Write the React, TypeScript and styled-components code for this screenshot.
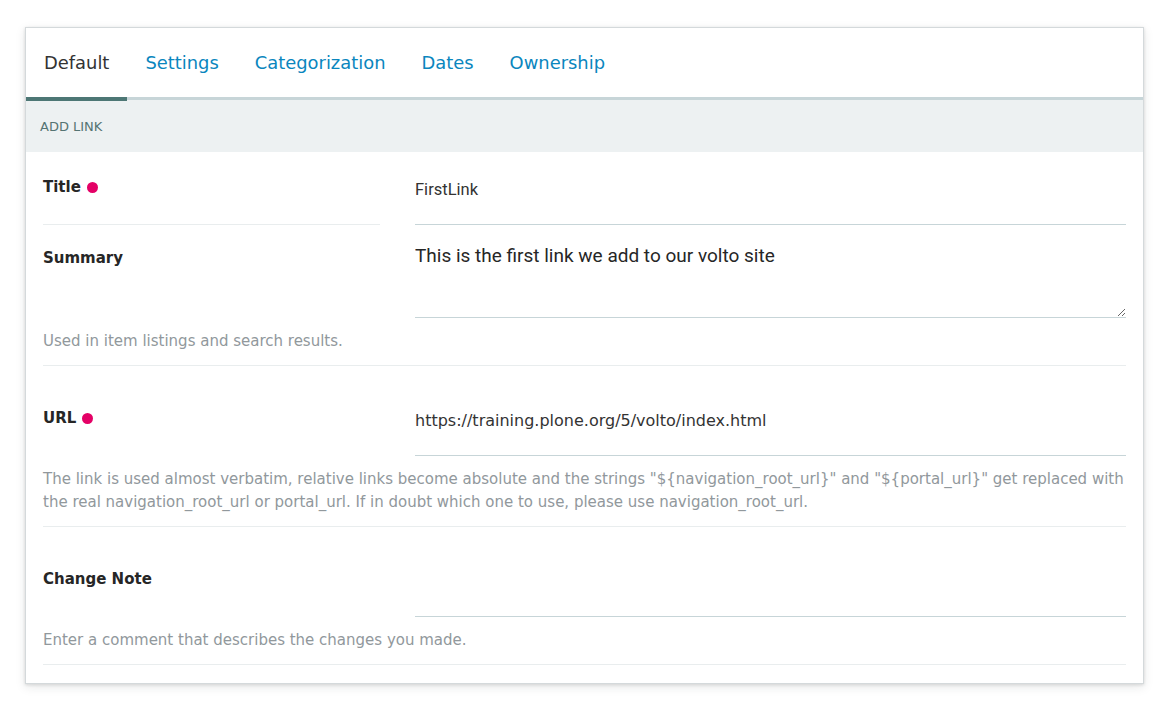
import React from "react";
import styled, { createGlobalStyle } from "styled-components";

const Global = createGlobalStyle`
  html, body { margin: 0; padding: 0; background: #ffffff; }
  body { font-family: "DejaVu Sans", "Noto Sans", sans-serif; color: #333333; }
  * { box-sizing: border-box; }
`;

const Page = styled.div`
  padding: 27px 22px 30px 25px;
`;

const Card = styled.div`
  width: 1119px;
  border: 1px solid #d4d9db;
  background: #fff;
  box-shadow: 0 1px 3px rgba(34, 36, 38, 0.14), 0 3px 10px rgba(34, 36, 38, 0.1);
  padding-bottom: 18px;
`;

const TabBar = styled.nav`
  display: flex;
  height: 72px;
  border-bottom: 3px solid #c7d5d8;
`;

const Tab = styled.a<{ $active?: boolean }>`
  display: flex;
  align-items: center;
  padding: 0 18px;
  margin-bottom: -4px;
  border-bottom: 4px solid ${(p) => (p.$active ? "#4d7775" : "transparent")};
  font-size: 17.9px;
  color: ${(p) => (p.$active ? "#333333" : "#0a86be")};
  text-decoration: none;
  position: relative;
  z-index: 1;
  cursor: pointer;
`;

const SectionHeader = styled.div`
  height: 52px;
  display: flex;
  align-items: center;
  padding-left: 14px;
  background: #edf1f2;
  font-size: 13px;
  color: #557473;
  text-transform: uppercase;
`;

const Fields = styled.div`
  padding: 0 17px;
`;

const FieldWrap = styled.div<{ $pad: number; $divider: boolean }>`
  padding-top: ${(p) => p.$pad}px;
  border-bottom: ${(p) => (p.$divider ? "1px solid #e9edee" : "none")};
`;

const FieldGrid = styled.div`
  display: grid;
  grid-template-columns: 337px 1fr;
  column-gap: 35px;
`;

const LabelCell = styled.div<{ $offset: number; $underline: boolean }>`
  padding-top: ${(p) => p.$offset}px;
  border-bottom: ${(p) => (p.$underline ? "1px solid #e9edee" : "none")};
`;

const Label = styled.label`
  display: inline-flex;
  align-items: center;
  gap: 6px;
  font-size: 15px;
  font-weight: 700;
  line-height: 20px;
  color: #262626;
`;

const Required = styled.span`
  width: 11px;
  height: 11px;
  border-radius: 50%;
  background: #e40166;
  display: inline-block;
`;

const TextInput = styled.input<{ $plain?: boolean }>`
  display: block;
  width: 100%;
  border: 0;
  border-bottom: 1px solid #c7d5d8;
  padding: 2px 0 25px;
  height: 48px;
  font-family: ${(p) => (p.$plain ? "Roboto, sans-serif" : '"DejaVu Sans", sans-serif')};
  font-size: ${(p) => (p.$plain ? "16.5px" : "16px")};
  line-height: 20px;
  color: #333;
  background: transparent;
  outline: none;
`;

const TextArea = styled.textarea`
  display: block;
  width: 100%;
  height: 73px;
  border: 0;
  border-bottom: 1px solid #c7d5d8;
  padding: 0;
  margin: 0;
  font-family: Roboto, sans-serif;
  font-size: 19px;
  line-height: 22px;
  color: #262626;
  background: transparent;
  outline: none;
  resize: vertical;
`;

const Help = styled.p`
  margin: 12px 0 0;
  padding-bottom: 12px;
  font-size: 15px;
  line-height: 23px;
  color: #91989c;
`;

type FieldProps = {
  label: string;
  required?: boolean;
  pad: number;
  labelOffset?: number;
  help?: string;
  children: React.ReactNode;
};

function Field({ label, required, pad, labelOffset = 0, help, children }: FieldProps) {
  return (
    <FieldWrap $pad={pad} $divider={!!help}>
      <FieldGrid>
        <LabelCell $offset={labelOffset} $underline={!help}>
          <Label>
            {label}
            {required && <Required />}
          </Label>
        </LabelCell>
        <div>{children}</div>
      </FieldGrid>
      {help && <Help>{help}</Help>}
    </FieldWrap>
  );
}

const tabs = ["Default", "Settings", "Categorization", "Dates", "Ownership"];

export default function App() {
  return (
    <>
      <Global />
      <Page>
        <Card>
          <TabBar>
            {tabs.map((t, i) => (
              <Tab key={t} $active={i === 0}>
                {t}
              </Tab>
            ))}
          </TabBar>
          <SectionHeader>Add Link</SectionHeader>
          <Fields>
            <Field label="Title" required pad={25}>
              <TextInput $plain readOnly value="FirstLink" />
            </Field>
            <Field
              label="Summary"
              pad={20}
              labelOffset={3}
              help="Used in item listings and search results."
            >
              <TextArea readOnly value="This is the first link we add to our volto site" />
            </Field>
            <Field
              label="URL"
              required
              pad={42}
              help={
                'The link is used almost verbatim, relative links become absolute and the strings "${navigation_root_url}" and "${portal_url}" get replaced with the real navigation_root_url or portal_url. If in doubt which one to use, please use navigation_root_url.'
              }
            >
              <TextInput readOnly value="https://training.plone.org/5/volto/index.html" />
            </Field>
            <Field
              label="Change Note"
              pad={42}
              help="Enter a comment that describes the changes you made."
            >
              <TextInput readOnly value="" />
            </Field>
          </Fields>
        </Card>
      </Page>
    </>
  );
}
